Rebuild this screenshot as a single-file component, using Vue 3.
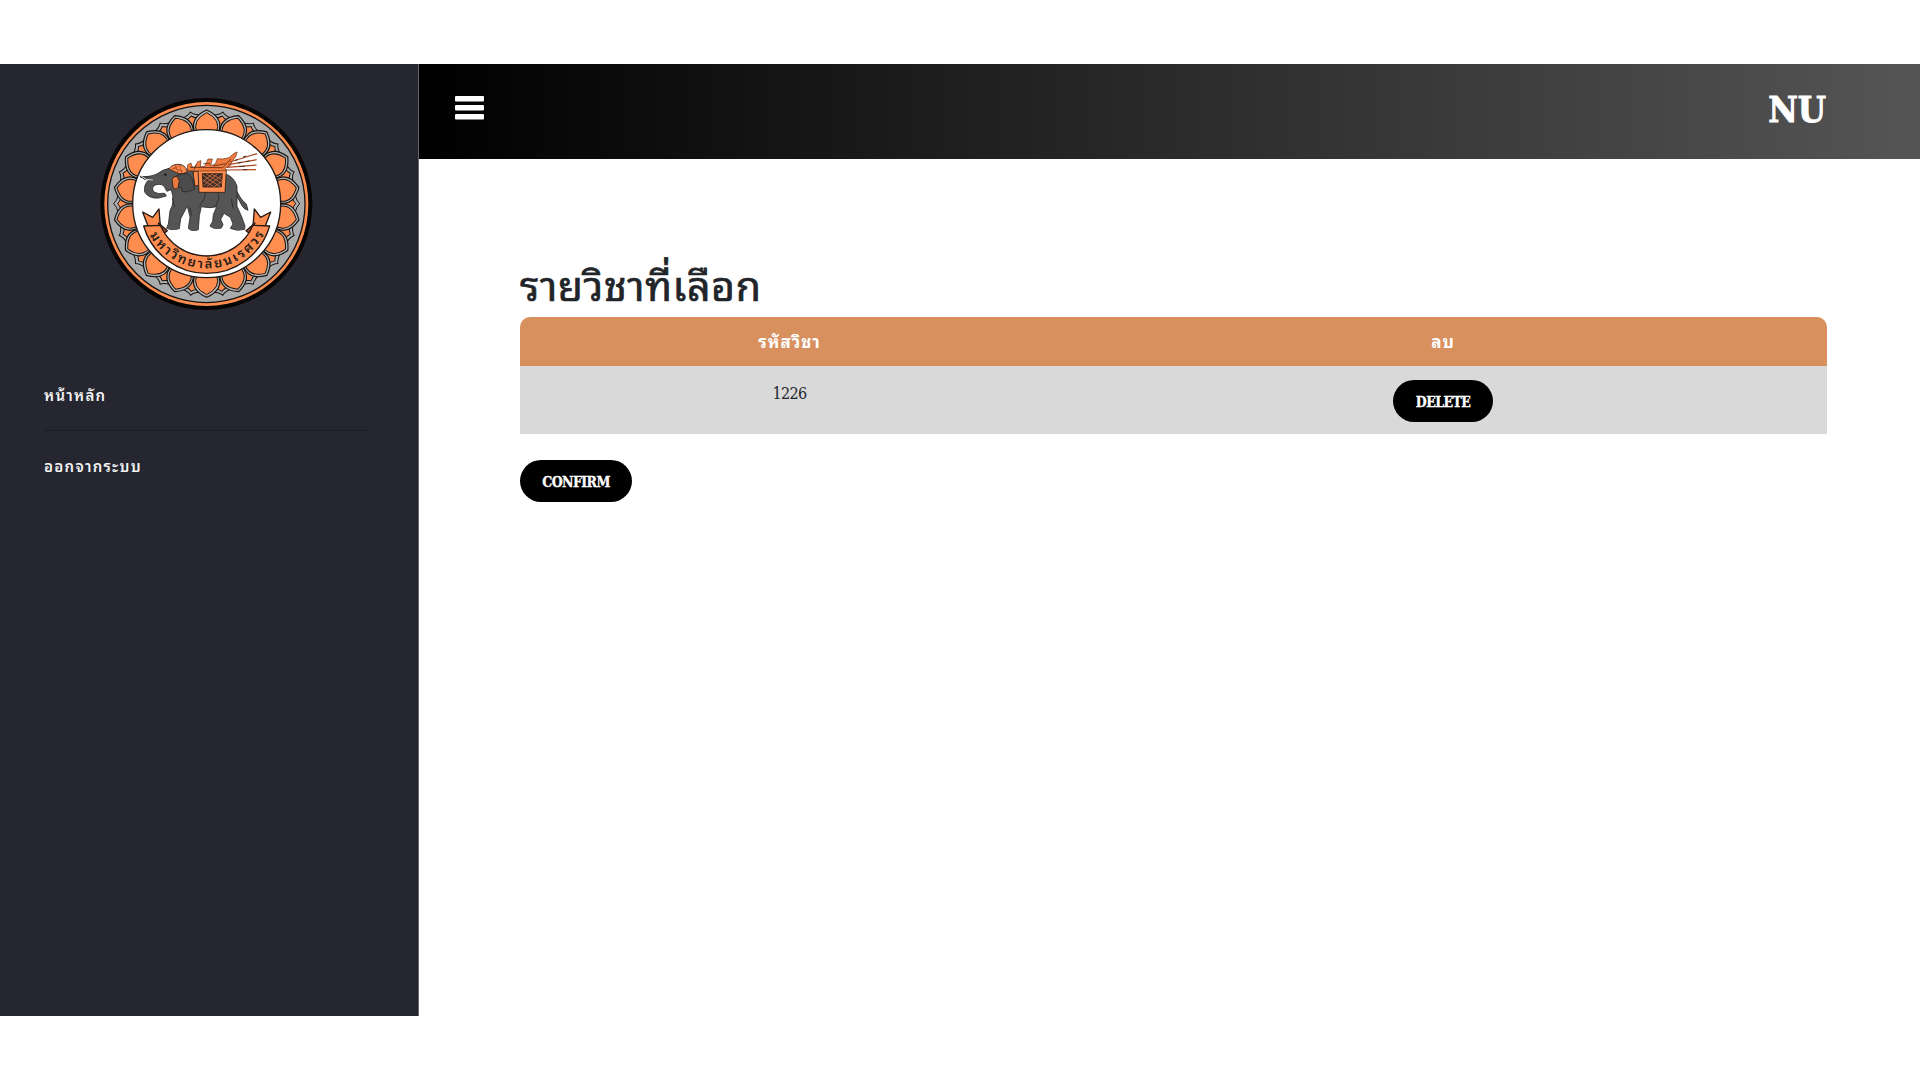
<script setup>
const petals = Array.from({ length: 18 }, (_, i) => i * 20)
const menu = ['หน้าหลัก', 'ออกจากระบบ']
const courses = [{ code: '1226' }]
</script>

<template>
  <div class="page">
    <aside class="sidebar">
      <svg class="logo" viewBox="0 0 690 690">
        <circle cx="349" cy="342" r="318" fill="#060504" />
        <circle cx="349" cy="342" r="306" fill="#ff8d50" />
        <circle cx="349" cy="342" r="296" fill="#a9aaac" stroke="#17120f" stroke-width="4" />
        <g v-for="a in petals" :key="'s' + a" :transform="`rotate(${a + 10} 350 341)`" stroke="#17130f" stroke-width="3">
          <path d="M322 120V76Q342 72 350 62Q358 72 378 76V120Z" fill="#adaeb0" />
          <path d="M332 120V84Q344 80 350 74Q356 80 368 84V120Z" fill="#ff8d50" />
        </g>
        <g v-for="a in petals" :key="'p' + a" :transform="`rotate(${a} 350 341)`" stroke="#17130f" stroke-width="3.5">
          <path d="M315 128Q297 84 350 60Q403 84 385 128Z" fill="#b3b4b5" />
          <path d="M321 128Q305 90 350 68Q395 90 379 128Z" fill="#ff8d50" stroke-width="3" />
        </g>
        <circle cx="350" cy="341" r="222" fill="#fff" stroke="#211a16" stroke-width="4" />

        <g stroke="#2a2a2b" stroke-width="2.5" stroke-linejoin="round" stroke-linecap="round">
          <path d="M431 292Q444 306 450 321Q459 335 469 342L474 361Q461 357 456 347L438 314Z" fill="#555" />
          <path d="M244 300Q256 336 240 362L235 404L230 415Q246 422 268 416L272 386L292 348L300 382L295 415Q306 426 325 419L328 377L334 350Q363 356 380 350L370 374L368 394L360 408Q374 419 394 414L399 404L392 388L402 370L421 382L429 402L421 415Q440 425 464 418L465 408L455 380L441 349L441 288Q430 258 405 251L322 247L268 232L238 235Q218 239 207 248Q193 258 166 260L150 260L167 269L178 268Q160 283 164 306Q177 327 206 324L229 318L224 310Q203 313 192 306Q181 291 198 284Q218 280 224 292L230 303Z" fill="#555" />
          <path d="M258 258Q293 240 306 264L314 298L301 303Q288 308 276 304L275 292Q262 296 258 286Z" fill="#4b4b4c" />
          <path d="M150 257L165 268L188 269M158 260L178 261M347 302L343 326L328 349M382 301L387 326L376 350M247 326L254 350M300 354L305 376M424 326L429 355" fill="none" />
          <path d="M151 256L168 268L188 270" fill="none" stroke="#ddd" stroke-width="3" />
          <circle cx="226" cy="254" r="3" fill="#111" />
        </g>
        <g fill="#555" stroke="none">
          <path d="M230 416q-1-14 7-14l31 1 2 13q-22 5-40 0M295 416l3-13 28 1-2 14q-17 8-29-2M360 410l7-12 30 2-4 15q-20 5-33-5M425 415l4-12 34 0 2 15q-20 7-40-3" />
        </g>

        <g stroke="#2c1a13" stroke-width="2.5" stroke-linejoin="round">
          <path d="M236 237Q250 219 273 224Q289 229 292 246Q279 253 267 251Z" fill="#ff8d50" />
          <path d="M247 234L279 244M256 226L265 249M268 224L275 249M244 239L265 228" fill="none" stroke="#a94a25" />
          <path d="M246 268Q251 257 261 259L268 272L264 292Q257 302 249 291Z" fill="#e9793d" />
          <path d="M309 246L326 242L326 286L315 288Z" fill="#ff8d50" />
          <path d="M324 239H409L405 307H327Z" fill="#ff8d50" />
          <path d="M337 251H397L394 291H339Z" fill="#40302c" />
          <path d="M338 255L392 291M350 252L395 280M365 252L396 270M340 270L370 290M382 252L340 287M396 256L350 290M367 252L339 275M396 274L371 291" stroke="#d97343" fill="none" />
          <path d="M292 242L293 224L303 219L306 231H315L323 215L333 212L331 230L344 229L354 207H367L362 227L376 222L382 206L397 207L417 203L432 190L442 186L436 202L427 212L421 227L405 234L409 242L333 243Z" fill="#f17a3d" stroke="#6b321c" stroke-width="2" />
          <path d="M300 232L398 233L423 207M340 221H360M370 228L406 221M312 239L318 224" fill="none" stroke="#5b2b19" />
          <path d="M420 216L501 191M414 224L500 209M411 232L500 225M410 240L498 239" stroke="#a94823" stroke-width="3.5" fill="none" />
          <path d="M435 211l8-2m16-8l10-3m-25 21l12-2m12-2l10-2m-30 17l16-1m-5 10l13 0" stroke="#4d2b20" stroke-width="3" />
        </g>

        <g fill="#ff8d50" stroke="#261711" stroke-width="4" stroke-linejoin="round">
          <path d="M174 408L158 366L188 382L207 357L210 397L216 426Z" />
          <path d="M526 408L542 366L512 382L493 357L490 397L484 426Z" />
          <path d="M205 399L232 422L222 430Z" fill="#9c5433" />
          <path d="M495 399L468 422L478 430Z" fill="#9c5433" />
          <path d="M161 408L211 406A151 151 0 0 0 489 406L539 408A196.8 196.8 0 0 1 161 408Z" />
        </g>
        <path id="motto" d="M172 423A197.4 197.4 0 0 0 528 423" fill="none" />
        <text class="motto" fill="#241a16"><textPath href="#motto" startOffset="14" textLength="418">มหาวิทยาลัยนเรศวร</textPath></text>
      </svg>
      <nav>
        <a v-for="m in menu" :key="m">{{ m }}</a>
      </nav>
    </aside>
    <section class="content">
      <header>
        <svg class="burger" viewBox="0 0 29 24" fill="#fff">
          <rect width="29" height="5.6" rx="1" />
          <rect y="9" width="29" height="5.6" rx="1" />
          <rect y="18" width="29" height="5.6" rx="1" />
        </svg>
        <strong class="brand">NU</strong>
      </header>
      <main>
        <h2>รายวิชาที่เลือก</h2>
        <div class="table">
          <div class="row head"><span>รหัสวิชา</span><span>ลบ</span></div>
          <div v-for="c in courses" :key="c.code" class="row body">
            <span>{{ c.code }}</span>
            <span><button class="delete"><b>DELETE</b></button></span>
          </div>
        </div>
        <button class="confirm"><b>CONFIRM</b></button>
      </main>
    </section>
  </div>
</template>

<style>
body { background: #fff; }
</style>

<style scoped>
.page {
  --thai: "Noto Sans Thai Looped", "Noto Looped Thai", "Loma", "Waree", "Garuda", "Noto Sans Thai", "Noto Sans", sans-serif;
  display: flex;
  box-sizing: border-box;
  height: 1080px;
  padding: 64px 0;
  overflow: hidden;
  font-family: "Roboto Slab", "DejaVu Serif Condensed", "DejaVu Serif", serif;
  color: #212529;
}
.sidebar {
  width: 418px;
  border-right: 1px solid #66666b;
  background: #25262f;
  box-sizing: content-box;
  flex: none;
}
.logo { display: block; width: 230px; height: 230px; margin: 26px 0 0 90px; }
.motto { font-family: var(--thai); font-size: 39px; font-weight: 600; }
nav { margin: 40px 50px 0 44px; }
nav a {
  display: block;
  height: 70px;
  line-height: 69px;
  font-family: var(--thai);
  font-size: 15px;
  font-weight: 600;
  letter-spacing: 1.25px;
  color: #f4f4f5;
  border-bottom: 1px solid #1c1c23;
}
nav a:last-child { border: 0; }
.content { flex: 1; min-width: 0; }
header {
  display: flex;
  justify-content: space-between;
  height: 95px;
  box-sizing: border-box;
  padding: 32px 94px 0 36px;
  background: linear-gradient(to right, #000, #555);
}
.burger { width: 29px; height: 24px; }
.brand {
  font-size: 36px;
  line-height: 27px;
  color: #fff;
  -webkit-text-stroke: 0.9px #fff;
}
main { padding: 92px 93px 0 101px; }
h2 {
  margin: 0;
  height: 66px;
  line-height: 64px;
  font-size: 41px;
  font-weight: 400;
  letter-spacing: 0.6px;
  font-family: var(--thai);
  white-space: nowrap;
  -webkit-text-stroke: 0.7px #212529;
}
.table { border-radius: 10px 10px 0 0; overflow: hidden; }
.row { display: grid; grid-template-columns: 539px 1fr; text-align: center; }
.head {
  height: 49px;
  line-height: 48px;
  background: #d7905e;
  color: #fff;
  font-family: var(--thai);
  font-size: 17px;
  font-weight: 700;
  letter-spacing: 1px;
}
.body { height: 68px; background: #d9d9d9; font-size: 16px; line-height: 24px; }
.body > span { padding-top: 14px; }
.body > span:first-child { padding-top: 16px; letter-spacing: -0.6px; }
button {
  display: inline-block;
  height: 42px;
  padding: 0;
  border: 0;
  border-radius: 21px;
  background: #000;
  color: #fff;
  font-family: inherit;
  font-size: 14px;
  line-height: 44px;
  letter-spacing: -0.6px;
  white-space: nowrap;
  -webkit-text-stroke: 0.3px #fff;
}
.delete { width: 100px; }
.confirm { display: block; width: 112px; margin-top: 26px; }
</style>
